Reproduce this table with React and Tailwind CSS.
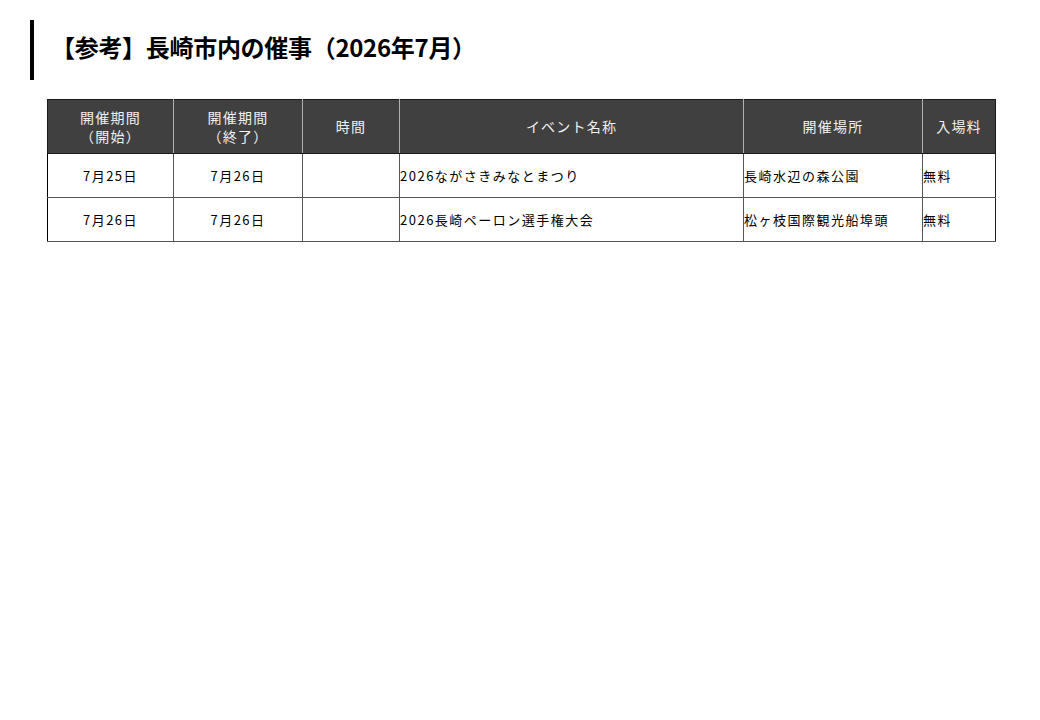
import React from 'react';

const font = { fontFamily: '"Noto Sans CJK JP", "Noto Sans", sans-serif' };

const events = [
  { start: '7月25日', end: '7月26日', time: '', name: '2026ながさきみなとまつり', place: '長崎水辺の森公園', fee: '無料' },
  { start: '7月26日', end: '7月26日', time: '', name: '2026長崎ペーロン選手権大会', place: '松ヶ枝国際観光船埠頭', fee: '無料' },
];

const App = () => {
  return (
    <div className="w-[1040px] h-[720px] bg-white text-black" style={font}>
      <div className="pl-[30px] pt-[20px] flex">
        <div className="w-[4px] h-[60px] bg-black" />
        <h1 className="ml-[17px] mt-[12px] text-[24px] leading-[30px] font-bold tracking-[-0.3px]">
          【参考】長崎市内の催事（2026年7月）
        </h1>
      </div>

      <div className="pl-[47px] pt-[19px]">
        <table className="w-[948px] border-collapse table-fixed text-[14px] tracking-[1.2px]">
          <colgroup>
            <col className="w-[126px]" />
            <col className="w-[129px]" />
            <col className="w-[97px]" />
            <col className="w-[344px]" />
            <col className="w-[179px]" />
            <col className="w-[73px]" />
          </colgroup>
          <thead>
            <tr className="h-[54px] bg-[#404040] text-[#f0f0f0] leading-[19px]">
              <th className="font-normal text-center border border-[#1a1a1a] border-r-[#b0b0b0]">開催期間<br />（開始）</th>
              <th className="font-normal text-center border border-[#1a1a1a] border-r-[#b0b0b0]">開催期間<br />（終了）</th>
              <th className="font-normal text-center border border-[#1a1a1a] border-r-[#b0b0b0]">時間</th>
              <th className="font-normal text-center border border-[#1a1a1a] border-r-[#b0b0b0]">イベント名称</th>
              <th className="font-normal text-center border border-[#1a1a1a] border-r-[#b0b0b0]">開催場所</th>
              <th className="font-normal text-center border border-[#1a1a1a]">入場料</th>
            </tr>
          </thead>
          <tbody>
            {events.map((ev, i) => (
              <tr key={i} className="h-[44px] text-[13px] tracking-[1.5px]">
                <td className="text-center border border-[#555] border-l-black">{ev.start}</td>
                <td className="text-center border border-[#555]">{ev.end}</td>
                <td className="text-center border border-[#555]">{ev.time}</td>
                <td className="text-left pl-0 border border-[#555]">{ev.name}</td>
                <td className="text-left pl-0 border border-[#555]">{ev.place}</td>
                <td className="text-left pl-0 border border-[#555] border-r-[#222]">{ev.fee}</td>
              </tr>
            ))}
          </tbody>
        </table>
      </div>
    </div>
  );
};

export default App;
